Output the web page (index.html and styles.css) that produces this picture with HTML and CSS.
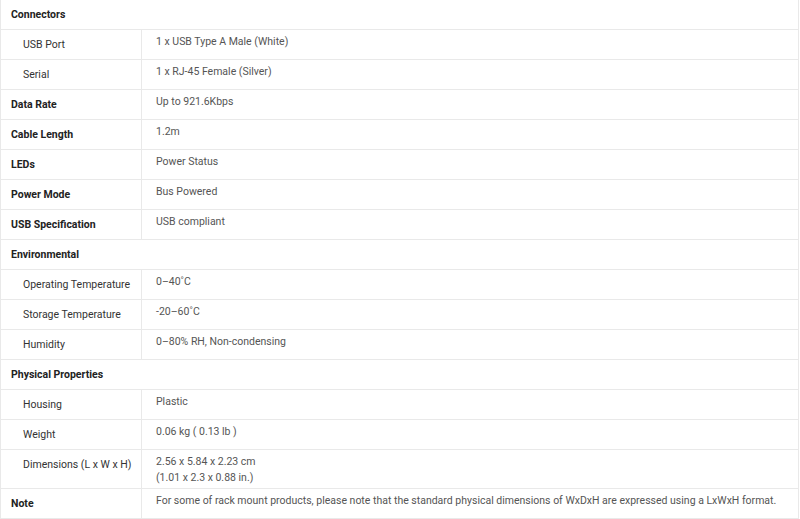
FILE: index.html
```html
<!DOCTYPE html>
<html>
<head>
<meta charset="utf-8">
<link rel="stylesheet" href="styles.css">
</head>
<body>
<table class="spec">
  <tr class="group first"><td colspan="2">Connectors</td></tr>
  <tr class="sub"><td class="label">USB Port</td><td class="value">1 x USB Type A Male (White)</td></tr>
  <tr class="sub"><td class="label">Serial</td><td class="value">1 x RJ-45 Female (Silver)</td></tr>
  <tr class="main"><td class="label">Data Rate</td><td class="value">Up to 921.6Kbps</td></tr>
  <tr class="main"><td class="label">Cable Length</td><td class="value">1.2m</td></tr>
  <tr class="main"><td class="label">LEDs</td><td class="value">Power Status</td></tr>
  <tr class="main"><td class="label">Power Mode</td><td class="value">Bus Powered</td></tr>
  <tr class="main"><td class="label">USB Specification</td><td class="value">USB compliant</td></tr>
  <tr class="group"><td colspan="2">Environmental</td></tr>
  <tr class="sub"><td class="label">Operating Temperature</td><td class="value">0–40˚C</td></tr>
  <tr class="sub"><td class="label">Storage Temperature</td><td class="value">-20–60˚C</td></tr>
  <tr class="sub"><td class="label">Humidity</td><td class="value">0–80% RH, Non-condensing</td></tr>
  <tr class="group"><td colspan="2">Physical Properties</td></tr>
  <tr class="sub"><td class="label">Housing</td><td class="value">Plastic</td></tr>
  <tr class="sub"><td class="label">Weight</td><td class="value">0.06 kg ( 0.13 lb )</td></tr>
  <tr class="sub"><td class="label">Dimensions (L x W x H)</td><td class="value">2.56 x 5.84 x 2.23 cm<br>(1.01 x 2.3 x 0.88 in.)</td></tr>
  <tr class="main"><td class="label">Note</td><td class="value">For some of rack mount products, please note that the standard physical dimensions of WxDxH are expressed using a LxWxH format.</td></tr>
</table>
</body>
</html>
```
FILE: styles.css
```css
html, body {
  margin: 0;
  padding: 0;
  background: #fff;
}
body {
  font-family: Roboto, "Liberation Sans", sans-serif;
  font-size: 10.5px;
  line-height: 16px;
}
.spec {
  width: 799px;
  border-collapse: collapse;
  border: 1px solid #e9e9e9;
  border-top: none;
}
.spec td {
  border-top: 1px solid #e9e9e9;
  border-bottom: 1px solid #e9e9e9;
  padding: 0;
  vertical-align: top;
}
.spec tr:first-child td {
  border-top: none;
}
.spec tr {
  height: 30px;
}
.spec tr.first {
  height: 29px;
}
.group td {
  padding: 7px 10px 0 10px;
  font-weight: 700;
  color: #222;
}
.label {
  width: 141px;
  box-sizing: border-box;
  border-right: 1px solid #e9e9e9;
  white-space: nowrap;
}
.main .label {
  padding: 7px 4px 0 10px;
  font-weight: 700;
  color: #222;
}
.sub .label {
  padding: 7px 4px 0 22px;
  color: #333;
}
.value {
  padding: 4px 8px 2px 14px !important;
  color: #555;
}
```
